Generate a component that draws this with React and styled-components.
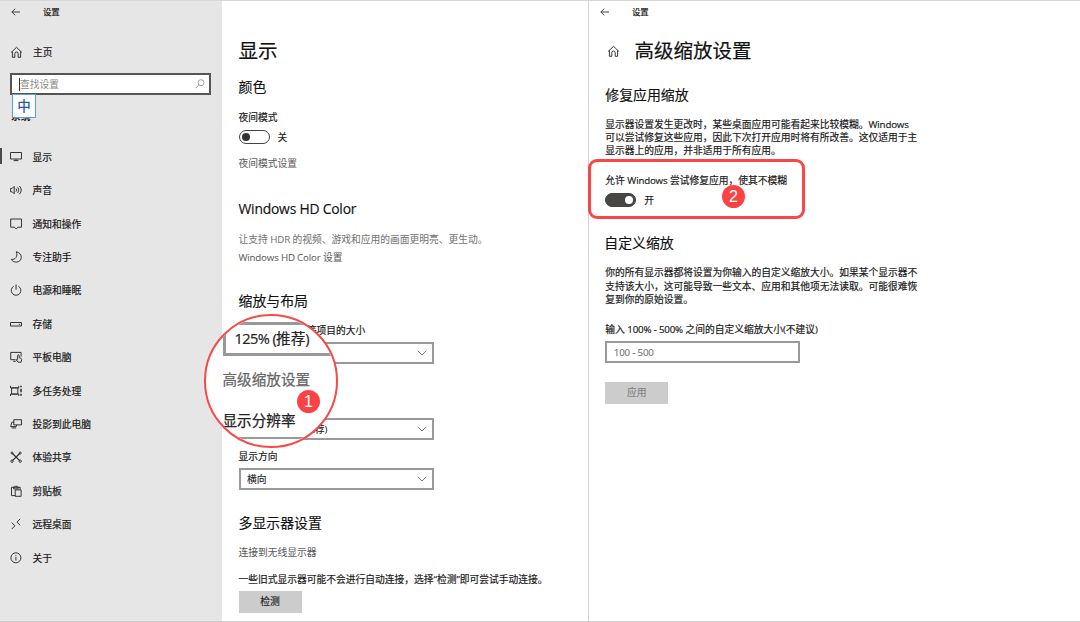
import React from "react";
import styled, { createGlobalStyle, css } from "styled-components";

const Global = createGlobalStyle`
  *, *::before, *::after { box-sizing: border-box; }
  html, body { margin: 0; padding: 0; background: #fff; }
  body {
    width: 1080px;
    height: 622px;
    overflow: hidden;
    font-family: "Open Sans", "Noto Sans CJK SC", sans-serif;
    font-size: 9.75px;
    color: #1a1a1a;
  }
`;

const Screen = styled.div`
  position: relative;
  display: flex;
  width: 1080px;
  height: 622px;
  border-top: 1px solid #d6d6d6;
  border-bottom: 1px solid #d0d0d0;
  overflow: hidden;
`;

const Sidebar = styled.aside`
  flex: none;
  width: 222px;
  background: #e6e6e6;
`;

const DisplayPane = styled.main`
  flex: none;
  width: 366px;
  padding: 36px 0 0 16.5px;
`;

const ScalingPane = styled.section`
  flex: 1;
  border-left: 1px solid #d4d4d4;
`;

const TitleBar = styled.header`
  display: flex;
  align-items: center;
  height: 21px;
  padding-left: ${(p) => p.$left}px;
  gap: 22px;
  font-size: 8.4px;
  line-height: 12px;
  -webkit-text-stroke: 0.2px currentColor;
`;

const IconSvg = styled.svg`
  display: block;
  flex: none;
  fill: none;
  stroke: ${(p) => p.$color || "#2b2b2b"};
  stroke-width: ${(p) => p.$weight || 0.95};
  overflow: visible;
`;

const HomeRow = styled.div`
  display: flex;
  align-items: center;
  height: 20px;
  margin-top: 20px;
  padding-left: 9px;
  gap: 10px;
  -webkit-text-stroke: 0.2px currentColor;
`;

const SearchBox = styled.div`
  display: flex;
  align-items: center;
  justify-content: space-between;
  width: 201px;
  height: 22px;
  margin: 11px 0 0 10px;
  padding: 0 4px 0 7px;
  border: 2px solid #555;
  background: #fff;
  color: #8a8a8a;
`;

const Query = styled.span`
  border-left: 1px solid #333;
  line-height: 13px;
`;

const SectionName = styled.div`
  position: relative;
  height: 20px;
  margin: 12px 0 0 11px;
  line-height: 20px;
  font-weight: 700;
`;

const ImeBadge = styled.div`
  position: absolute;
  left: 1px;
  top: -13px;
  width: 24px;
  height: 24px;
  border: 1.5px solid #5b9edb;
  background: #fbfdff;
  color: #2b6096;
  font-size: 13.5px;
  font-weight: 500;
  line-height: 22px;
  text-align: center;
`;

const Nav = styled.nav`
  margin-top: 13px;
`;

const NavItem = styled.div`
  display: flex;
  align-items: center;
  height: 33.42px;
  padding-left: 9px;
  gap: 9.5px;
  -webkit-text-stroke: 0.2px currentColor;
  ${(p) =>
    p.$active &&
    css`
      background: linear-gradient(#4a4a4a, #4a4a4a) 0 8px / 2px 16px no-repeat;
    `}
`;

const Title = styled.h1`
  margin: 0;
  font-size: 19.5px;
  font-weight: 400;
  line-height: 28px;
  color: #111;
  -webkit-text-stroke: 0.2px currentColor;
`;

const Heading = styled.h2`
  margin: ${(p) => p.$top}px 0 0 ${(p) => p.$left || 0}px;
  font-size: 13.9px;
  font-weight: 400;
  line-height: 20px;
  color: #111;
  -webkit-text-stroke: 0.15px currentColor;
`;

const tones = { normal: "#1a1a1a", link: "#5c5c5c", muted: "#757575" };

const Text = styled.p`
  margin: ${(p) => p.$top}px 0 0;
  line-height: ${(p) => p.$line || 14}px;
  color: ${(p) => tones[p.$tone || "normal"]};
  white-space: pre;
  -webkit-text-stroke: ${(p) => (p.$tone ? 0.05 : 0.18)}px currentColor;
`;

const Latin = styled.span`
  letter-spacing: ${(p) => p.$tracking || -0.2}px;
`;

const SwitchRow = styled.div`
  display: flex;
  align-items: center;
  height: 14px;
  margin-top: ${(p) => p.$top}px;
  gap: 8px;
  -webkit-text-stroke: 0.15px currentColor;
`;

const Track = styled.span`
  display: flex;
  align-items: center;
  justify-content: ${(p) => (p.$on ? "flex-end" : "flex-start")};
  width: 31px;
  height: 14px;
  padding: 0 2px;
  border: 1.4px solid #444;
  border-radius: 7px;
  background: ${(p) => (p.$on ? "#484644" : "#fff")};
`;

const Knob = styled.span`
  width: 8px;
  height: 8px;
  border-radius: 50%;
  background: ${(p) => (p.$on ? "#fff" : "#333")};
`;

const Field = styled.div`
  display: flex;
  align-items: center;
  justify-content: space-between;
  width: 195px;
  height: 22px;
  margin-top: ${(p) => p.$top}px;
  padding: 0 5px 0 6.5px;
  border: 2px solid #999;
  background: #fff;
  color: ${(p) => (p.$placeholder ? "#707070" : "#1a1a1a")};
  -webkit-text-stroke: 0.1px currentColor;
`;

const Button = styled.button`
  display: block;
  width: 63px;
  height: 22px;
  margin: ${(p) => p.$top}px 0 0;
  padding: 0;
  border: 0;
  background: #ccc;
  color: ${(p) => (p.disabled ? "#858585" : "#1a1a1a")};
  font: inherit;
  line-height: 22px;
  -webkit-text-stroke: 0.15px currentColor;
`;

const PageHeader = styled.div`
  display: flex;
  align-items: center;
  margin-top: 15px;
  padding-left: 16.5px;
  gap: 15px;
`;

const ScalingBody = styled.div`
  padding-left: 16.3px;
`;

const Magnifier = styled.div`
  position: absolute;
  left: 204px;
  top: 313px;
  width: 134px;
  height: 134px;
  border: 2px solid #f84848;
  border-radius: 50%;
  background: #fff;
  overflow: hidden;
  color: #222;
  font-size: 14.6px;
  line-height: 20px;
  padding: 6px 0 0 16.5px;
`;

const LensSelect = styled.div`
  width: 140px;
  height: 34px;
  padding: 3px 0 0 9px;
  border: 3px solid #999;
  line-height: 20px;
  white-space: nowrap;
  -webkit-text-stroke: 0.2px currentColor;
`;

const LensText = styled.div`
  margin-top: ${(p) => p.$top}px;
  color: ${(p) => (p.$link ? "#686868" : "#222")};
  -webkit-text-stroke: 0.25px currentColor;
`;

const LensEdge = styled.div`
  width: 140px;
  height: 2px;
  margin-top: 7px;
  background: #999;
`;

const Highlight = styled.div`
  position: absolute;
  left: 588px;
  top: 158px;
  width: 217px;
  height: 60px;
  border: 3px solid #f94646;
  border-radius: 9px;
`;

const Step = styled.div`
  position: absolute;
  left: ${(p) => p.$x}px;
  top: ${(p) => p.$y}px;
  width: 23px;
  height: 23px;
  border-radius: 50%;
  background: #fc4243;
  color: #fff;
  font-family: "Liberation Sans", sans-serif;
  font-size: 16px;
  line-height: 23px;
  text-align: center;
`;

const glyphs = {
  home: <path d="M2.2 7.4 7.5 2.3l5.3 5.1M3.4 6.4v5.900h2.400V8.700a1.700 1.700 0 0 1 3.400 0v3.600h2.400V6.400" />,
  display: <path d="M1.500 2.500h11v6.500h-11zM7 9v1.700M4.600 10.600h4.800" />,
  sound: (
    <path d="M1.600 5.400h1.600l2-2v7.400l-2-2H1.600zM7 5.600q1.300 1.500 0 3M8.700 4.300q2.400 2.800 0 5.600M10.400 3q3.800 4 0 8.200" />
  ),
  notice: <path d="M1.700 2h10.800v8.200H9l-1.900 1.700-1.900-1.700H1.700z" />,
  moon: <path d="M7.300 1.700C10.200 2.500 12.300 4.500 12.300 7.300c0 2.800-2.200 4.800-5 4.800-2.200 0-4.200-1-5-2.700C6.400 9.900 9.100 6.200 7.300 1.700z" />,
  power: <path d="M4.700 3.300a4.800 4.800 0 1 0 4.700 0M7.050 1.500v5.300" />,
  storage: <path d="M1.500 5.500h11v3.500h-11zM9.900 7.300h1.200" />,
  tablet: (
    <path d="M6.200 9.700H1.700V2.400h10.400v4.200M4.200 11.300h2.600M8.600 9.600V5.600a.8.800 0 0 1 1.600 0v2.200l1.700.500q.800.300.700 1.200l-.5 2.700H9L6.900 9.700q.7-.8 1.700.300" />
  ),
  tasks: (
    <>
      <path d="M2.600 3.900h6.200v6.200H2.600zM1.500 1.800v2.100h8.300V1.800M1.500 12v-1.900h8.300V12" />
      <path d="M12 1.800v1.500M12 4.700v3.500M12 9.800v2" strokeWidth="1.500" />
    </>
  ),
  project: <path d="M4.800 2.700h7.700v5.200H4.800zM4.800 5.200H2.900L1.600 9.600h5.600l.5-1.700M2.500 10.900h4.700" />,
  share: (
    <>
      <path d="m3.500 3.500 7.200 7.200M10.700 3.500l-7.200 7.200" strokeWidth="1.200" />
      <circle cx="3" cy="3" r="1" />
      <circle cx="11.200" cy="3" r="1" />
      <circle cx="3" cy="11.200" r="1.200" />
      <circle cx="11.200" cy="11.200" r="1.200" />
    </>
  ),
  clipboard: <path d="M6.200 11.600H2.500V3.300h8.700v2.300M4.700 4.900V2.900h1.200q1-2.200 2 0h1.200v2zM6.200 5.900h5.900v6.400H6.200z" />,
  remote: <path d="m2.700 5.600 3.200 3.200-3.200 3.300M11.200 1.800 8 5.100l3.200 3.200" />,
  info: (
    <>
      <circle cx="6.900" cy="6.800" r="5" />
      <path d="M6.900 6v3.500M6.900 4.200v1" />
    </>
  ),
};

const Icon = ({ name, size = 14 }) => (
  <IconSvg width={size} height={size} viewBox="0 0 14 14">
    {glyphs[name]}
  </IconSvg>
);

const BackArrow = () => (
  <IconSvg width="10" height="10" viewBox="0 0 10 10" $weight={0.9}>
    <path d="M9 5H.8M4.200 1.700.9 5l3.300 3.300" />
  </IconSvg>
);

const Chevron = () => (
  <IconSvg width="10" height="6" viewBox="0 0 10 6" $color="#777">
    <path d="M.700.700 5 5 9.300.700" />
  </IconSvg>
);

const SearchGlyph = () => (
  <IconSvg width="10" height="10" viewBox="0 0 10 10" $color="#888" $weight={0.8}>
    <circle cx="6" cy="3.700" r="3" />
    <path d="M3.900 5.900.700 9.200" />
  </IconSvg>
);

const Switch = ({ on, top, children }) => (
  <SwitchRow $top={top}>
    <Track $on={on}>
      <Knob $on={on} />
    </Track>
    {children}
  </SwitchRow>
);

const navItems = [
  ["display", "显示"],
  ["sound", "声音"],
  ["notice", "通知和操作"],
  ["moon", "专注助手"],
  ["power", "电源和睡眠"],
  ["storage", "存储"],
  ["tablet", "平板电脑"],
  ["tasks", "多任务处理"],
  ["project", "投影到此电脑"],
  ["share", "体验共享"],
  ["clipboard", "剪贴板"],
  ["remote", "远程桌面"],
  ["info", "关于"],
];

export default function App() {
  return (
    <>
      <Global />
      <Screen>
        <Sidebar>
          <TitleBar $left={11}>
            <BackArrow />
            设置
          </TitleBar>
          <HomeRow>
            <Icon name="home" />
            主页
          </HomeRow>
          <SearchBox>
            <Query>查找设置</Query>
            <SearchGlyph />
          </SearchBox>
          <SectionName>
            系统
            <ImeBadge>中</ImeBadge>
          </SectionName>
          <Nav>
            {navItems.map(([icon, label], i) => (
              <NavItem key={icon} $active={i === 0}>
                <Icon name={icon} />
                {label}
              </NavItem>
            ))}
          </Nav>
        </Sidebar>

        <DisplayPane>
          <Title>显示</Title>
          <Heading $top={12}>颜色</Heading>
          <Text $top={14}>夜间模式</Text>
          <Switch top={5}>关</Switch>
          <Text $top={13} $tone="link">夜间模式设置</Text>
          <Heading $top={28}>
            <Latin $tracking={-0.22}>Windows HD Color</Latin>
          </Heading>
          <Text $top={14} $tone="muted">
            让支持 <Latin>HDR</Latin> 的视频、游戏和应用的画面更明亮、更生动。
          </Text>
          <Text $top={4} $tone="link">
            <Latin>Windows HD Color</Latin> 设置
          </Text>
          <Heading $top={26}>缩放与布局</Heading>
          <Text $top={13}>更改文本、应用等项目的大小</Text>
          <Field $top={4}>
            <span>
              <Latin>125% (</Latin>推荐)
            </span>
            <Chevron />
          </Field>
          <Field $top={54.4}>
            <span>
              <Latin>1920 × 1080 (</Latin>推荐)
            </span>
            <Chevron />
          </Field>
          <Text $top={9.6}>显示方向</Text>
          <Field $top={4}>
            横向
            <Chevron />
          </Field>
          <Heading $top={23}>多显示器设置</Heading>
          <Text $top={13} $tone="link">连接到无线显示器</Text>
          <Text $top={13}>一些旧式显示器可能不会进行自动连接，选择“检测”即可尝试手动连接。</Text>
          <Button $top={4}>检测</Button>
        </DisplayPane>

        <ScalingPane>
          <TitleBar $left={11}>
            <BackArrow />
            设置
          </TitleBar>
          <PageHeader>
            <Icon name="home" />
            <Title>高级缩放设置</Title>
          </PageHeader>
          <ScalingBody>
            <Heading $top={20}>修复应用缩放</Heading>
            <Text $top={13} $line={13}>
              显示器设置发生更改时，某些桌面应用可能看起来比较模糊。<Latin>Windows</Latin>
              {"\n可以尝试修复这些应用，因此下次打开应用时将有所改善。这仅适用于主\n显示器上的应用，并非适用于所有应用。"}
            </Text>
            <Text $top={17}>
              允许 <Latin>Windows</Latin> 尝试修复应用，使其不模糊
            </Text>
            <Switch top={5.4} on>开</Switch>
            <Heading $top={26} $left={-1}>自定义缩放</Heading>
            <Text $top={13} $line={13.2}>
              {"你的所有显示器都将设置为你输入的自定义缩放大小。如果某个显示器不\n支持该大小，这可能导致一些文本、应用和其他项无法读取。可能很难恢\n复到你的原始设置。"}
            </Text>
            <Text $top={17}>
              输入 <Latin>100% - 500%</Latin> 之间的自定义缩放大小(不建议)
            </Text>
            <Field $top={4} $placeholder>
              <Latin>100 - 500</Latin>
            </Field>
            <Button $top={19.4} disabled>应用</Button>
          </ScalingBody>
        </ScalingPane>

        <Magnifier>
          <LensSelect>
            <Latin $tracking={-0.6}>125% (</Latin>推荐)
          </LensSelect>
          <LensText $top={13} $link>高级缩放设置</LensText>
          <LensText $top={21}>显示分辨率</LensText>
          <LensEdge />
        </Magnifier>
        <Highlight />
        <Step $x={297} $y={389}>1</Step>
        <Step $x={722} $y={184}>2</Step>
      </Screen>
    </>
  );
}
